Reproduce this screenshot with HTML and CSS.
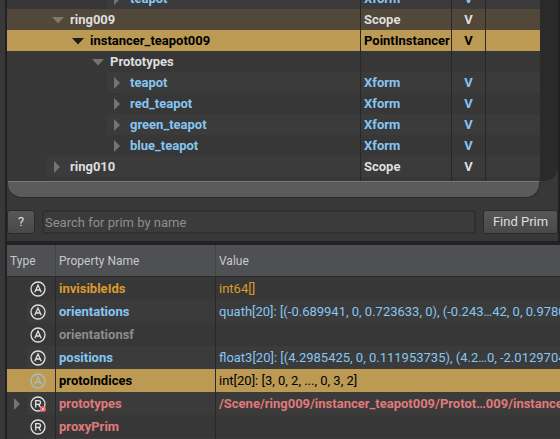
FILE: index.html
```html
<!DOCTYPE html>
<html lang="en">
<head>
<meta charset="utf-8">
<title>Prim browser</title>
<link rel="stylesheet" href="styles.css">
</head>
<body>
<svg class="defs" aria-hidden="true">
  <symbol id="right" viewBox="0 0 12 12"><path d="M2 0L8 6L2 12Z"/></symbol>
  <symbol id="down" viewBox="0 0 12 12"><path d="M0 3H12L6 9.5Z"/></symbol>
  <symbol id="attr" viewBox="0 0 16 16"><circle cx="8" cy="8" r="7"/><path d="M4.8 11.2L8 4L11.2 11.2M5.8 9H10.2"/></symbol>
  <symbol id="rel" viewBox="0 0 16 16"><circle cx="8" cy="8" r="7"/><path d="M5.7 11.6V4.6H8.6A1.9 1.9 0 0 1 8.6 8.4H5.7M8.5 8.4L10.7 11.6"/></symbol>
  <symbol id="target" viewBox="0 0 6 6"><circle cx="3" cy="3" r="3" fill="#e8595c"/><path d="M1.4 1.4L4.6 4.6M4.6 1.4L1.4 4.6" fill="none" stroke="#f8c8c8"/></symbol>
</svg>
<main class="app">
  <section class="prims">
    <div class="viewport">
      <div class="tree-scroll">
        <table class="tree">
          <colgroup><col><col class="c-type"><col class="c-vis"><col class="c-extra"></colgroup>
          <tbody>
            <tr class="alt d4 xform"><td><div class="node"><button aria-label="Expand"><svg><use href="#right"/></svg></button>teapot</div></td><td>Xform</td><td>V</td><td></td></tr>
            <tr class="parent d1"><td><div class="node"><button aria-label="Collapse"><svg><use href="#down"/></svg></button>ring009</div></td><td>Scope</td><td>V</td><td></td></tr>
            <tr class="selected d2"><td><div class="node"><button aria-label="Collapse"><svg><use href="#down"/></svg></button>instancer_teapot009</div></td><td>PointInstancer</td><td>V</td><td></td></tr>
            <tr class="d3"><td><div class="node"><button aria-label="Collapse"><svg><use href="#down"/></svg></button>Prototypes</div></td><td></td><td></td><td></td></tr>
            <tr class="alt d4 xform"><td><div class="node"><button aria-label="Expand"><svg><use href="#right"/></svg></button>teapot</div></td><td>Xform</td><td>V</td><td></td></tr>
            <tr class="d4 xform"><td><div class="node"><button aria-label="Expand"><svg><use href="#right"/></svg></button>red_teapot</div></td><td>Xform</td><td>V</td><td></td></tr>
            <tr class="alt d4 xform"><td><div class="node"><button aria-label="Expand"><svg><use href="#right"/></svg></button>green_teapot</div></td><td>Xform</td><td>V</td><td></td></tr>
            <tr class="d4 xform"><td><div class="node"><button aria-label="Expand"><svg><use href="#right"/></svg></button>blue_teapot</div></td><td>Xform</td><td>V</td><td></td></tr>
            <tr class="alt d1"><td><div class="node"><button aria-label="Expand"><svg><use href="#right"/></svg></button>ring010</div></td><td>Scope</td><td>V</td><td></td></tr>
            <tr><td></td><td></td><td></td><td></td></tr>
          </tbody>
        </table>
      </div>
      <div class="vbar"></div>
    </div>
    <div class="hbar"></div>
    <form class="search">
      <button class="btn help" type="button">?</button>
      <input type="text" aria-label="Search for prim by name" placeholder="Search for prim by name">
      <button class="btn find" type="button">Find Prim</button>
    </form>
  </section>
  <section class="props">
    <table class="proptable">
      <colgroup><col class="c-icon"><col class="c-name"><col></colgroup>
      <thead><tr><th>Type</th><th>Property Name</th><th>Value</th></tr></thead>
      <tbody>
        <tr class="fallback"><td><div class="kind"><svg class="ico"><use href="#attr"/></svg></div></td><td>invisibleIds</td><td>int64[]</td></tr>
        <tr class="alt authored"><td><div class="kind"><svg class="ico"><use href="#attr"/></svg></div></td><td>orientations</td><td>quath[20]: [(-0.689941, 0, 0.723633, 0), (-0.243…42, 0, 0.97802</td></tr>
        <tr class="unset"><td><div class="kind"><svg class="ico"><use href="#attr"/></svg></div></td><td>orientationsf</td><td></td></tr>
        <tr class="alt authored"><td><div class="kind"><svg class="ico"><use href="#attr"/></svg></div></td><td>positions</td><td>float3[20]: [(4.2985425, 0, 0.111953735), (4.2…0, -2.0129704),</td></tr>
        <tr class="selected"><td><div class="kind"><svg class="ico"><use href="#attr"/></svg></div></td><td>protoIndices</td><td>int[20]: [3, 0, 2, ..., 0, 3, 2]</td></tr>
        <tr class="alt relation"><td><div class="kind"><button aria-label="Expand"><svg><use href="#right"/></svg></button><span class="badged"><svg class="ico"><use href="#rel"/></svg><svg class="badge"><use href="#target"/></svg></span></div></td><td>prototypes</td><td>/Scene/ring009/instancer_teapot009/Protot…009/instancer</td></tr>
        <tr class="relation"><td><div class="kind"><svg class="ico"><use href="#rel"/></svg></div></td><td>proxyPrim</td><td></td></tr>
        <tr class="alt"><td><div class="kind"></div></td><td></td><td></td></tr>
      </tbody>
    </table>
  </section>
</main>
</body>
</html>
```
FILE: styles.css
```css
* { box-sizing: border-box; }
body {
  margin: 0;
  height: 100vh;
  overflow: hidden;
  background: #383838;
  color: #dedede;
  font: 13px/20px Roboto, "Liberation Sans", sans-serif;
}
.defs { position: absolute; width: 0; height: 0; }
.app {
  display: flex;
  flex-direction: column;
  height: 100%;
  margin-left: 5px;
  border-left: 2px solid #222;
}
button { padding: 0; border: 0; background: none; color: inherit; font: inherit; }

.prims {
  border-right: 2px solid #222;
  border-bottom: 4px solid #222;
}
.viewport { display: flex; height: 181px; }
.tree-scroll { flex: 1; overflow: hidden; background: #373737; }
.vbar { width: 18px; background: #2a2a2a; border-bottom-right-radius: 14px; }
.hbar {
  height: 17px;
  margin: 0 18px 0 1px;
  background: #5b5b5b;
  border: 1px solid #2a2a2a;
  border-top-color: #777;
  border-left: 0;
  border-radius: 0 0 14px 14px;
}

table { width: 100%; table-layout: fixed; border-collapse: separate; border-spacing: 0; }
td, th { padding: 0 0 0 3px; overflow: hidden; white-space: nowrap; text-align: left; }
td + td, th + th { border-left: 1px solid #282828; }

.tree { margin-top: -12px; font-weight: 700; }
.tree td { height: 21px; }
.tree td:first-child { padding: 0; }
.tree td:nth-child(3) { padding: 0; text-align: center; }
.c-type { width: 91px; }
.c-vis { width: 34px; }
.c-extra { width: 55px; }
.node { display: flex; align-items: center; height: 21px; }
.node button { width: 23px; height: 12px; padding-left: 5px; }
.node svg, .kind button svg { display: block; width: 12px; height: 12px; fill: #747474; }
.d1 .node { margin-left: 40px; }
.d2 .node { margin-left: 60px; }
.d3 .node { margin-left: 80px; }
.d4 .node { margin-left: 100px; }
.alt td + td, .alt .node, .alt .kind { background: #3b3b3b; }
.xform { color: #86c6f2; }
.parent td { background: #51483a; }
.selected td { background: #bc9a54; color: #000; }
.tree .selected svg { fill: #1c1c1c; }
.parent .node svg { fill: #81786a; }

.search { display: flex; gap: 7px; padding: 12px 0 7px; }
.btn {
  height: 24px;
  border: 1px solid #2b2b2b;
  border-radius: 3px;
  background: linear-gradient(#575757, #494949);
}
.help { width: 28px; }
.find { width: 75px; }
.search input {
  flex: 1;
  min-width: 0;
  height: 24px;
  padding: 0 1px;
  border: 2px solid #303030;
  border-radius: 3px;
  background: #3b3b3b;
  color: #dedede;
  font: inherit;
}
.search input::placeholder { color: #8e8e8e; opacity: 1; }

.props { flex: 1; min-height: 0; overflow: hidden; background: #373737; }
.c-icon { width: 48px; }
.c-name { width: 160px; }
.proptable th {
  height: 32px;
  background: #4f5053;
  border-bottom: 1px solid #2a2a2a;
  border-left-color: #414244;
  color: #c8c8c8;
  font-size: 12px;
  font-weight: 400;
}
.proptable td { height: 23px; }
.proptable td:first-child { padding: 0; }
.proptable td:nth-child(2) { font-weight: 700; }
.kind {
  position: relative;
  display: flex;
  align-items: center;
  height: 23px;
  margin-left: 20px;
  padding-left: 3px;
}
tr:has(.kind button) td:first-child { overflow: visible; }
.kind button { position: absolute; left: -15px; height: 12px; }
.ico {
  display: block;
  width: 16px;
  height: 16px;
  fill: none;
  stroke: #e2e2e2;
  stroke-width: 1.3;
}
.selected .ico { stroke: #a5bfc2; }
.badged { position: relative; }
.badge { position: absolute; right: 0; bottom: 0; width: 6px; height: 6px; }
.fallback { color: #dc9a2c; }
.authored { color: #86c6f2; }
.unset { color: #8c8c8c; }
.relation { color: #e07a7a; }
.relation td { font-weight: 700; }
```
